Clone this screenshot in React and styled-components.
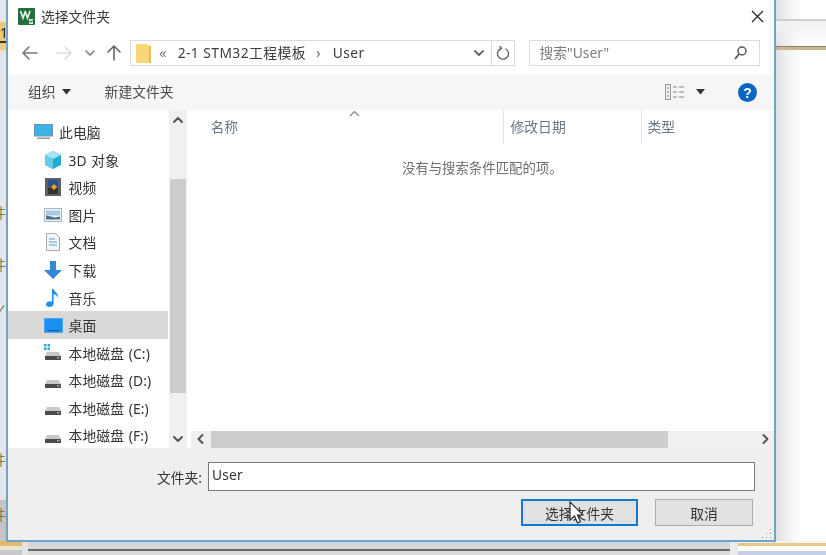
import React from 'react'
import styled, { createGlobalStyle } from 'styled-components'

const Global = createGlobalStyle`
  html, body { margin: 0; padding: 0; background: #fff; }
  body { font-family: "Noto Sans", "Noto Sans CJK SC", sans-serif; }
`

const Desk = styled.div`
  position: relative;
  width: 826px;
  height: 555px;
  overflow: hidden;
  background: #fff;
  filter: blur(0.35px);
`
const BackLeft = styled.div`
  position: absolute;
  left: 0;
  top: 0;
  width: 7px;
  height: 541px;
  overflow: hidden;
  background: linear-gradient(180deg, #e4e7ea 0 22px, #edc67c 22px 41px, #3c3420 41px 43px, #eecb85 43px 50px, #e3e6e9 50px 500px, #c4c4c4 500px);
`
const EdgeGlyph = styled.span`
  position: absolute;
  left: ${p => p.$left}px;
  top: ${p => p.$top}px;
  font-size: 14px;
  line-height: 14px;
  color: ${p => p.$color};
`
const BackRight = styled.div`
  position: absolute;
  right: 0;
  top: 0;
  width: 52px;
  height: 543px;
  background:
    linear-gradient(180deg, transparent 0 19px, #cfcfcf 19px 21px, #f1f1f1 21px, transparent 46px, #8c8063 46px 47px, #cbb78f 47px 50px, transparent 50px),
    linear-gradient(90deg, #dcdde0, #f2f2f4 14px, #fff 28px);
`
const BackBottom = styled.div`
  position: absolute;
  left: 0;
  right: 0;
  bottom: 0;
  height: 14px;
  display: flex;
`
const BottomTan = styled.div`
  width: 22px;
  flex: none;
  background: linear-gradient(180deg, #e3b96a 0 5px, #e9e4d8 5px 9px, #c9c9c9 9px);
`
const BottomGrey = styled.div`
  flex: 1;
  background: linear-gradient(180deg, #d6d6d6 0 8px, #6a6a6a 8px 10px, #dcdcdc 10px);
  border-left: 6px solid #e4e4e4;
  border-right: 8px solid #ececec;
`
const BottomPanel = styled.div`
  width: 88px;
  flex: none;
  background: linear-gradient(180deg, #f4f4f4 0 2px, #e7c980 2px 5px, #fff 5px 10px, #c6d0e0 10px);
`
const Dialog = styled.div`
  position: absolute;
  left: 6px;
  top: -2px;
  width: 770px;
  height: 544px;
  box-sizing: border-box;
  display: flex;
  flex-direction: column;
  background: #fff;
  border: 2px solid #6aa5cf;
  color: #333;
  font-size: 14px;
`
const TitleBar = styled.div`
  height: 32px;
  padding: 0 10.5px 6px 10px;
  flex: none;
  display: flex;
  align-items: center;
  gap: 6px;
`
const TitleText = styled.span`
  flex: 1;
  font-size: 13.8px;
  color: #3a3a3a;
`
const AddressRow = styled.div`
  height: 35px;
  flex: none;
  display: flex;
  align-items: flex-start;
  padding: 2px 14px 0 13px;
`
const NavIcons = styled.div`
  width: 109px;
  height: 26px;
  flex: none;
  display: flex;
  align-items: center;
`
const NavSlot = styled.span`
  width: 18px;
  flex: none;
  display: flex;
  justify-content: center;
  margin-left: ${p => p.$ml || 0}px;
`
const Field = styled.div`
  height: 26px;
  box-sizing: border-box;
  border: 1px solid #d9dde0;
  display: flex;
  align-items: center;
  background: #fff;
`
const PathBox = styled(Field)`
  width: 385px;
  flex: none;
`
const FolderSlot = styled.span`
  width: 20px;
  padding-left: 5px;
  display: flex;
`
const Crumb = styled.span`
  font-size: 13.8px;
  letter-spacing: 0.45px;
  color: #3c3c3c;
  margin-left: ${p => p.$ml || 0}px;
  padding-bottom: 2px;
`
const CrumbSep = styled.span`
  font-size: 15px;
  color: #777;
  margin-left: ${p => p.$ml || 0}px;
  padding-bottom: 2px;
`
const PathEnd = styled.div`
  margin-left: auto;
  height: 100%;
  display: flex;
  align-items: center;
`
const RefreshSlot = styled.span`
  width: 22px;
  height: 100%;
  margin-left: 6px;
  border-left: 1px solid #d9dde0;
  display: flex;
  align-items: center;
  justify-content: center;
`
const SearchBox = styled(Field)`
  width: 231.5px;
  flex: none;
  margin-left: 13.5px;
  padding: 0 12px 0 10px;
  justify-content: space-between;
  color: #7a7a7a;
  font-size: 13.8px;
`
const SearchHint = styled.span`
  padding-bottom: 2px;
`
const Toolbar = styled.div`
  height: 35px;
  flex: none;
  background: #f5f6f7;
  display: flex;
  align-items: center;
  padding: 0 17px 0 20px;
  font-size: 13.8px;
  line-height: 20px;
  color: #4a4a4a;
`
const ToolButton = styled.span`
  display: flex;
  align-items: center;
  gap: ${p => p.$gap || 6}px;
  margin-right: ${p => p.$mr || 0}px;
  padding-bottom: 2px;
`
const ToolSpacer = styled.span`
  flex: 1;
`
const Main = styled.div`
  flex: 1;
  min-height: 0;
  display: flex;
`
const NavPane = styled.div`
  width: 160.5px;
  flex: none;
  padding-top: 8.5px;
  overflow: hidden;
`
const NavRow = styled.div`
  height: 27.55px;
  margin-right: 1px;
  display: flex;
  align-items: center;
  gap: 6px;
  box-sizing: border-box;
  padding-left: ${p => (p.$root ? 26 : 35.5)}px;
  background: ${p => (p.$selected ? '#d9d9d9' : 'transparent')};
  color: #333;
  font-size: 13.8px;
  letter-spacing: 0.1px;
  word-spacing: 1px;
  white-space: nowrap;
`
const IconBox = styled.span`
  width: 19px;
  height: 19px;
  flex: none;
  display: flex;
  align-items: center;
  justify-content: center;
`
const VScroll = styled.div`
  width: 18px;
  flex: none;
  background: #f0f0f0;
  display: flex;
  flex-direction: column;
  align-items: center;
`
const ScrollCap = styled.div`
  width: 100%;
  flex: ${p => (p.$end ? 1 : 'none')};
  height: ${p => (p.$end ? 'auto' : '22px')};
  padding-bottom: ${p => (p.$end ? '3px' : 0)};
  box-sizing: border-box;
  display: flex;
  align-items: ${p => (p.$end ? 'flex-end' : 'center')};
  justify-content: center;
`
const VThumb = styled.div`
  width: 16px;
  height: 214px;
  flex: none;
  background: #cdcdcd;
  margin-top: 47px;
`
const ListPane = styled.div`
  flex: 1;
  min-width: 0;
  margin-left: 4px;
  display: flex;
  flex-direction: column;
`
const ListHeader = styled.div`
  height: 34px;
  flex: none;
  position: relative;
  display: grid;
  grid-template-columns: 313px 138px 1fr;
  color: #6a7785;
  font-size: 13.8px;
`
const HeadCell = styled.div`
  display: flex;
  align-items: center;
  box-sizing: border-box;
  padding: 0 0 3px ${p => p.$pad}px;
  border-right: ${p => (p.$line ? '1px solid #e5e5e5' : '0')};
`
const SortMark = styled.span`
  position: absolute;
  left: 158px;
  top: 0;
  display: flex;
`
const ListBody = styled.div`
  flex: 1;
  min-height: 0;
  padding: 14px 0 0 0;
  text-align: center;
  color: #6d6d6d;
  font-size: 13.4px;
  line-height: 20px;
`
const HScroll = styled.div`
  height: 17px;
  flex: none;
  background: #f0f0f0;
  display: flex;
  align-items: center;
`
const HThumb = styled.div`
  width: 457px;
  height: 17px;
  background: #cdcdcd;
`
const HCap = styled.span`
  flex: ${p => (p.$end ? 1 : 'none')};
  width: 20.5px;
  padding-right: ${p => (p.$end ? '3px' : 0)};
  display: flex;
  justify-content: ${p => (p.$end ? 'flex-end' : 'center')};
`
const Footer = styled.div`
  height: 92.5px;
  flex: none;
  position: relative;
  background: #efefef;
  display: flex;
  flex-direction: column;
  padding: 14.5px 19px 0 0;
  box-sizing: border-box;
`
const NameRow = styled.div`
  display: flex;
  align-items: center;
  height: 29px;
`
const NameLabel = styled.label`
  width: 200px;
  flex: none;
  text-align: right;
  font-size: 13.8px;
  color: #333;
  padding-right: 6px;
  box-sizing: border-box;
`
const NameInput = styled.div`
  flex: 1;
  height: 29px;
  box-sizing: border-box;
  border: 1.5px solid #7a7a7a;
  background: #fff;
  padding-left: 3px;
  font-size: 13.8px;
  line-height: 23px;
  letter-spacing: 0.2px;
  color: #333;
`
const ButtonRow = styled.div`
  display: flex;
  justify-content: flex-end;
  gap: 17px;
  margin-top: 8px;
  padding-right: 2px;
`
const Button = styled.div`
  width: ${p => p.$w}px;
  height: 27px;
  box-sizing: border-box;
  display: flex;
  align-items: center;
  justify-content: center;
  background: #e1e1e1;
  border: ${p => (p.$primary ? '2px solid #0f7ad1' : '1.5px solid #adadad')};
  font-size: 13.8px;
  color: #333;
`
const Grip = styled.svg`
  position: absolute;
  right: 2px;
  bottom: 1px;
`
const Pointer = styled.svg`
  position: absolute;
  left: 569px;
  top: 501px;
`

const stroke = { fill: 'none', strokeLinecap: 'round', strokeLinejoin: 'round' }

const Chevron = ({ dir = 'down', color = '#555', w = 1.8 }) => {
  const d = {
    up: 'M2 7l4-4 4 4',
    down: 'M2 4l4 4 4-4',
    left: 'M7.5 2L3.5 6l4 4',
    right: 'M4.5 2l4 4-4 4',
  }[dir]
  return (
    <svg width="12" height="12" viewBox="0 0 12 12">
      <path d={d} {...stroke} stroke={color} strokeWidth={w} />
    </svg>
  )
}

const Arrow = ({ d, color }) => (
  <svg width="16" height="16" viewBox="0 0 16 16">
    <path d={d} {...stroke} stroke={color} strokeWidth="1.6" />
  </svg>
)

const Caret = () => (
  <svg width="9" height="6" viewBox="0 0 9 6">
    <path d="M0 0h9L4.5 5.5z" fill="#333" />
  </svg>
)

const AppLogo = () => (
  <svg width="17" height="17" viewBox="0 0 17 17">
    <rect width="17" height="17" rx="1" fill="#23703f" />
    <path d="M2.500 3l2.500 7 2.500-7M7 3l2.500 7L12 3" fill="none" stroke="#eaf3e4" strokeWidth="1.700" />
    <path d="M11 11h4v1.500h-2.500v1H15V16h-4v-1.500h2.500v-1H11z" fill="#eaf3e4" />
  </svg>
)

const Folder = () => (
  <svg width="16" height="21" viewBox="0 0 16 21">
    <path d="M0 1h10l5 2v17H0z" fill="#f8d778" />
    <path d="M13 3h2v17h-2z" fill="#e6bd5a" />
  </svg>
)

const Monitor = ({ color = '#3fb1ea' }) => (
  <svg width="19" height="16" viewBox="0 0 19 16">
    <rect x="0.5" y="0.5" width="18" height="11.5" fill={color} stroke="#6f95ad" />
    <rect x="3" y="13.5" width="13" height="1.5" fill="#9a9a9a" />
  </svg>
)

const Desktop = () => (
  <svg width="19" height="15" viewBox="0 0 19 15">
    <rect x="0.5" y="0.5" width="18" height="14" fill="#1a8fef" stroke="#4aa7ee" />
    <rect x="4" y="12" width="11" height="1" fill="#0b5fa8" />
  </svg>
)

const Cube = () => (
  <svg width="18" height="18" viewBox="0 0 18 18">
    <path d="M9 0l8 4v10l-8 4-8-4V4z" fill="#2ba7d6" />
    <path d="M9 0l8 4-8 4-8-4z" fill="#a5e4f4" />
    <path d="M1 4l8 4v10l-8-4z" fill="#64cde8" />
  </svg>
)

const Film = () => (
  <svg width="16" height="18" viewBox="0 0 16 18">
    <rect width="16" height="18" fill="#5a5f68" />
    <rect x="3" y="2" width="10" height="6.5" fill="#2c4f85" />
    <rect x="3" y="9.5" width="10" height="6.5" fill="#38302a" />
    <path d="M6 9l3-3 3 3-3 3z" fill="#e2a52d" />
  </svg>
)

const Picture = () => (
  <svg width="18" height="14" viewBox="0 0 18 14">
    <rect x="0.5" y="0.5" width="17" height="13" fill="#f3f6f8" stroke="#a9b4bc" />
    <rect x="2" y="2.5" width="14" height="5" fill="#a8c8e2" />
    <path d="M2 11.5V7.5l5 1 4 1 5-1v3z" fill="#4a7391" />
  </svg>
)

const Doc = () => (
  <svg width="14" height="18" viewBox="0 0 14 18">
    <path d="M0.5 0.5h9l4 4v13H0.5z" fill="#f5f7f9" stroke="#a3acb3" />
    <path d="M3 6h6M3 9h8M3 12h8" stroke="#5da2d5" strokeWidth="1.2" />
  </svg>
)

const Download = () => (
  <svg width="18" height="18" viewBox="0 0 18 18">
    <path d="M6 0h6v9h6l-9 9-9-9h6z" fill="#2f88d8" />
  </svg>
)

const Note = () => (
  <svg width="14" height="18" viewBox="0 0 14 18">
    <path d="M6 0h1.6c.4 3 5.4 4 4.4 9-.5-2.200-2.500-3.500-4.400-4v9.500C7.600 16.500 5.800 18 3.500 18 1.500 18 0 17 0 15.300s2-3 4-3c.8 0 1.500.2 2 .5z" fill="#1f8ee6" />
  </svg>
)

const Drive = ({ win }) => (
  <svg width="18" height="17" viewBox="0 0 18 17">
    {win && <path d="M0 0h2.500v2.500H0zM3.500 0H6v2.500H3.500zM0 3.500h2.500V6H0zM3.500 3.500H6V6H3.500z" fill="#27a5e6" />}
    <path d="M3 8h12l2 4H1z" fill="#c8c8c8" />
    <rect x="1" y="12" width="16" height="4" rx="0.5" fill="#4a4a4a" />
    <rect x="13" y="13.300" width="2.500" height="1" fill="#d0d0d0" />
  </svg>
)

const navItems = [
  { label: '此电脑', icon: <Monitor />, root: true },
  { label: '3D 对象', icon: <Cube /> },
  { label: '视频', icon: <Film /> },
  { label: '图片', icon: <Picture /> },
  { label: '文档', icon: <Doc /> },
  { label: '下载', icon: <Download /> },
  { label: '音乐', icon: <Note /> },
  { label: '桌面', icon: <Desktop />, selected: true },
  { label: '本地磁盘 (C:)', icon: <Drive win /> },
  { label: '本地磁盘 (D:)', icon: <Drive /> },
  { label: '本地磁盘 (E:)', icon: <Drive /> },
  { label: '本地磁盘 (F:)', icon: <Drive /> },
]

const edgeGlyphs = [
  { top: 206, left: -8, text: '件' },
  { top: 258, left: -8, text: '件' },
  { top: 304, left: -5, text: '✓', color: '#4f8f4a' },
  { top: 453, left: -8, text: '件' },
  { top: 508, left: -8, text: '件' },
]

export default function App() {
  return (
    <>
      <Global />
      <Desk>
        <BackLeft>
          <EdgeGlyph $left={0} $top={26} $color="#222">1</EdgeGlyph>
          {edgeGlyphs.map(g => (
            <EdgeGlyph key={g.top} $left={g.left} $top={g.top} $color={g.color || '#8a7a30'}>{g.text}</EdgeGlyph>
          ))}
        </BackLeft>
        <BackRight />
        <BackBottom>
          <BottomTan />
          <BottomGrey />
          <BottomPanel />
        </BackBottom>
        <Dialog>
          <TitleBar>
            <AppLogo />
            <TitleText>选择文件夹</TitleText>
            <svg width="13" height="13" viewBox="0 0 13 13">
              <path d="M1 1l11 11M12 1L1 12" stroke="#222" strokeWidth="1.2" fill="none" />
            </svg>
          </TitleBar>
          <AddressRow>
            <NavIcons>
              <NavSlot><Arrow d="M15 8H1M7 2L1 8l6 6" color="#777" /></NavSlot>
              <NavSlot $ml={16}><Arrow d="M1 8h14M9 2l6 6-6 6" color="#dcdcdc" /></NavSlot>
              <NavSlot $ml={8}><Chevron color="#999" /></NavSlot>
              <NavSlot $ml={6}><Arrow d="M8 15V1M2 7l6-6 6 6" color="#666" /></NavSlot>
            </NavIcons>
            <PathBox>
              <FolderSlot><Folder /></FolderSlot>
              <CrumbSep $ml={3}>«</CrumbSep>
              <Crumb $ml={11}>2-1 STM32工程模板</Crumb>
              <CrumbSep $ml={10}>›</CrumbSep>
              <Crumb $ml={12}>User</Crumb>
              <PathEnd>
                <Chevron color="#666" />
                <RefreshSlot>
                  <svg width="14" height="15" viewBox="0 0 14 15">
                    <path d="M5 2.500a5.500 5.500 0 1 0 5 .5M4 .5l1.500 2-2 1.500" {...stroke} stroke="#666" strokeWidth="1.4" />
                  </svg>
                </RefreshSlot>
              </PathEnd>
            </PathBox>
            <SearchBox>
              <SearchHint>搜索"User"</SearchHint>
              <svg width="13" height="14" viewBox="0 0 13 14">
                <circle cx="8" cy="5" r="4" fill="none" stroke="#555" strokeWidth="1.5" />
                <path d="M5 8l-4 5" stroke="#555" strokeWidth="1.8" />
              </svg>
            </SearchBox>
          </AddressRow>
          <Toolbar>
            <ToolButton $mr={34}>组织 <Caret /></ToolButton>
            <ToolButton>新建文件夹</ToolButton>
            <ToolSpacer />
            <ToolButton $mr={33} $gap={11}>
              <svg width="20" height="16" viewBox="0 0 20 16">
                <rect x="0.500" y="0.500" width="5" height="15" fill="#eee" stroke="#999" />
                <path d="M8 3h4M14 3h5M8 8h4M14 8h5M8 13h4M14 13h5M2 4h2M2 8h2M2 12h2" stroke="#888" strokeWidth="1.200" />
              </svg>
              <Caret />
            </ToolButton>
            <svg width="19" height="19" viewBox="0 0 19 19">
              <circle cx="9.500" cy="9.500" r="9.500" fill="#0b66c0" />
              <text x="9.500" y="14.500" textAnchor="middle" fontSize="14" fontWeight="700" fill="#fff" fontFamily="Liberation Sans, sans-serif">?</text>
            </svg>
          </Toolbar>
          <Main>
            <NavPane>
              {navItems.map(item => (
                <NavRow key={item.label} $root={item.root} $selected={item.selected}>
                  <IconBox>{item.icon}</IconBox>
                  {item.label}
                </NavRow>
              ))}
            </NavPane>
            <VScroll>
              <ScrollCap><Chevron dir="up" color="#555" w={2} /></ScrollCap>
              <VThumb />
              <ScrollCap $end><Chevron color="#555" w={2} /></ScrollCap>
            </VScroll>
            <ListPane>
              <ListHeader>
                <HeadCell $pad={20} $line>名称</HeadCell>
                <HeadCell $pad={7} $line>修改日期</HeadCell>
                <HeadCell $pad={6}>类型</HeadCell>
                <SortMark>
                  <svg width="11" height="7" viewBox="0 0 11 7">
                    <path d="M1 6l4.500-4.500L10 6" fill="none" stroke="#888" strokeWidth="1.200" />
                  </svg>
                </SortMark>
              </ListHeader>
              <ListBody>没有与搜索条件匹配的项。</ListBody>
              <HScroll>
                <HCap><Chevron dir="left" color="#555" w={2} /></HCap>
                <HThumb />
                <HCap $end><Chevron dir="right" color="#555" w={2} /></HCap>
              </HScroll>
            </ListPane>
          </Main>
          <Footer>
            <NameRow>
              <NameLabel>文件夹:</NameLabel>
              <NameInput>User</NameInput>
            </NameRow>
            <ButtonRow>
              <Button $w={117} $primary>选择文件夹</Button>
              <Button $w={98}>取消</Button>
            </ButtonRow>
            <Grip width="11" height="11" viewBox="0 0 11 11">
              <path d="M9 1h1v1H9zM5 5h1v1H5zM9 5h1v1H9zM1 9h1v1H1zM5 9h1v1H5zM9 9h1v1H9z" fill="#9a9a9a" />
            </Grip>
          </Footer>
        </Dialog>
        <Pointer width="15" height="24" viewBox="0 0 15 24">
          <path d="M1 1v18l4.500-4 3 7 3-1.300-3-6.700H14z" fill="#fff" stroke="#222" strokeWidth="1.100" />
        </Pointer>
      </Desk>
    </>
  )
}
